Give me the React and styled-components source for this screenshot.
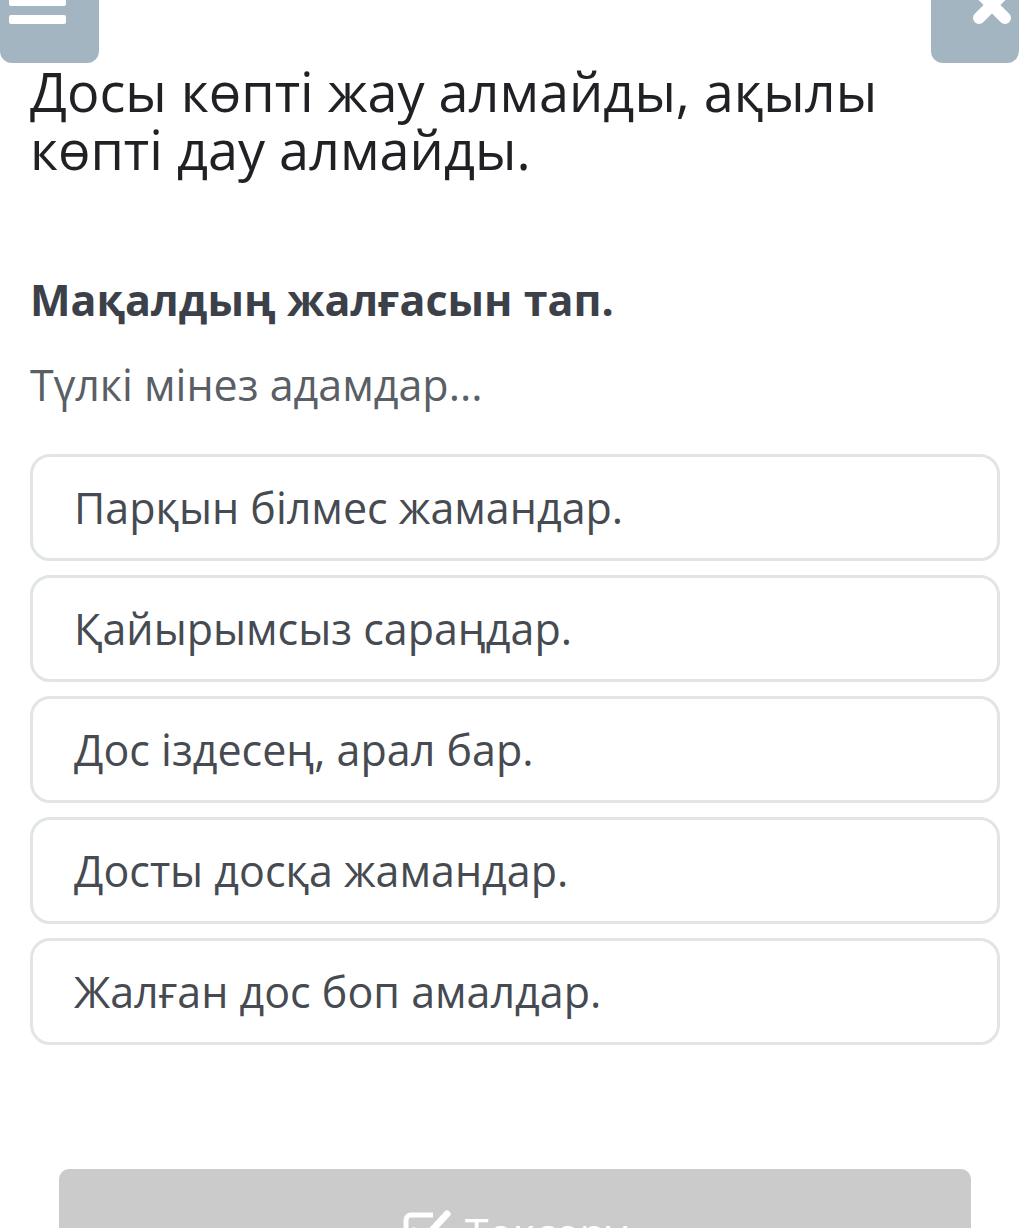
import React from "react";
import styled, { createGlobalStyle } from "styled-components";

const Global = createGlobalStyle`
  html, body { margin: 0; padding: 0; background: #ffffff; }
  body { font-family: "Open Sans", "Noto Sans", sans-serif; overflow: hidden; }
`;

const Page = styled.div`
  width: 1019px;
  display: flex;
  flex-direction: column;
`;

const TopBar = styled.div`
  height: 63px;
  display: flex;
  justify-content: space-between;
  align-items: flex-end;
  overflow: hidden;
`;

const CornerButton = styled.div`
  width: ${(p) => p.$w}px;
  height: 100px;
  background: #a3b5c1;
  border-radius: 12px;
  position: relative;
  flex: none;
`;

const MenuIcon = styled.svg`
  position: absolute;
  left: 9px;
  bottom: 36px;
`;

const CloseIcon = styled.svg`
  position: absolute;
  right: -1px;
  bottom: 30px;
`;

const Content = styled.div`
  padding: 0 19px 0 30px;
  display: flex;
  flex-direction: column;
`;

const Title = styled.h1`
  margin: -1px 0 0;
  font-size: 54px;
  line-height: 58px;
  font-weight: 400;
  color: #1f2124;
`;

const Subtitle = styled.h2`
  margin: 97px 0 0;
  font-size: 43px;
  line-height: 50px;
  font-weight: 700;
  color: #3c4049;
`;

const Prompt = styled.p`
  margin: 35px 0 0;
  font-size: 43px;
  line-height: 50px;
  font-weight: 400;
  color: #5a5e65;
`;

const Options = styled.div`
  margin-top: 44px;
  display: flex;
  flex-direction: column;
  gap: 14px;
`;

const Option = styled.div`
  height: 107px;
  box-sizing: border-box;
  border: 3px solid #e1e5e7;
  border-radius: 20px;
  display: flex;
  align-items: center;
  padding-left: 41px;
  font-size: 43px;
  color: #464a51;
`;

const CheckButton = styled.div`
  margin: 124px 29px 0;
  height: 120px;
  background: #cbcbcb;
  border-radius: 10px;
  display: flex;
  justify-content: center;
  align-items: flex-start;
  padding-top: 40px;
  box-sizing: border-box;
  gap: 12px;
  color: #ffffff;
  font-size: 43px;
  line-height: 50px;
`;

const options = [
  "Парқын білмес жамандар.",
  "Қайырымсыз сараңдар.",
  "Дос іздесең, арал бар.",
  "Досты досқа жамандар.",
  "Жалған дос боп амалдар.",
];

export default function App() {
  return (
    <Page>
      <Global />
      <TopBar>
        <CornerButton $w={99}>
          <MenuIcon width="57" height="30" viewBox="0 0 57 30">
            <rect x="0" y="0" width="57" height="9" rx="2" fill="#fff" />
            <rect x="0" y="18" width="57" height="9" rx="2" fill="#fff" />
          </MenuIcon>
        </CornerButton>
        <CornerButton $w={88}>
          <CloseIcon width="56" height="56" viewBox="0 0 56 56">
            <path d="M15 15 L41 41 M41 15 L15 41" stroke="#fff" strokeWidth="12" strokeLinecap="round" />
          </CloseIcon>
        </CornerButton>
      </TopBar>
      <Content>
        <Title>
          Досы көпті жау алмайды, ақылы
          <br />
          көпті дау алмайды.
        </Title>
        <Subtitle>Мақалдың жалғасын тап.</Subtitle>
        <Prompt>Түлкі мінез адамдар...</Prompt>
        <Options>
          {options.map((o) => (
            <Option key={o}>{o}</Option>
          ))}
        </Options>
        <CheckButton>
          <svg width="50" height="44" viewBox="0 0 50 44">
            <path d="M30 6 H8 a5 5 0 0 0 -5 5 V36 a5 5 0 0 0 5 5 H33 a5 5 0 0 0 5 -5 V28" fill="none" stroke="#fff" strokeWidth="5" />
            <path d="M11 22 L20 31 L44 5" fill="none" stroke="#fff" strokeWidth="7" strokeLinecap="round" strokeLinejoin="round" />
          </svg>
          <span>Тексеру</span>
        </CheckButton>
      </Content>
    </Page>
  );
}
